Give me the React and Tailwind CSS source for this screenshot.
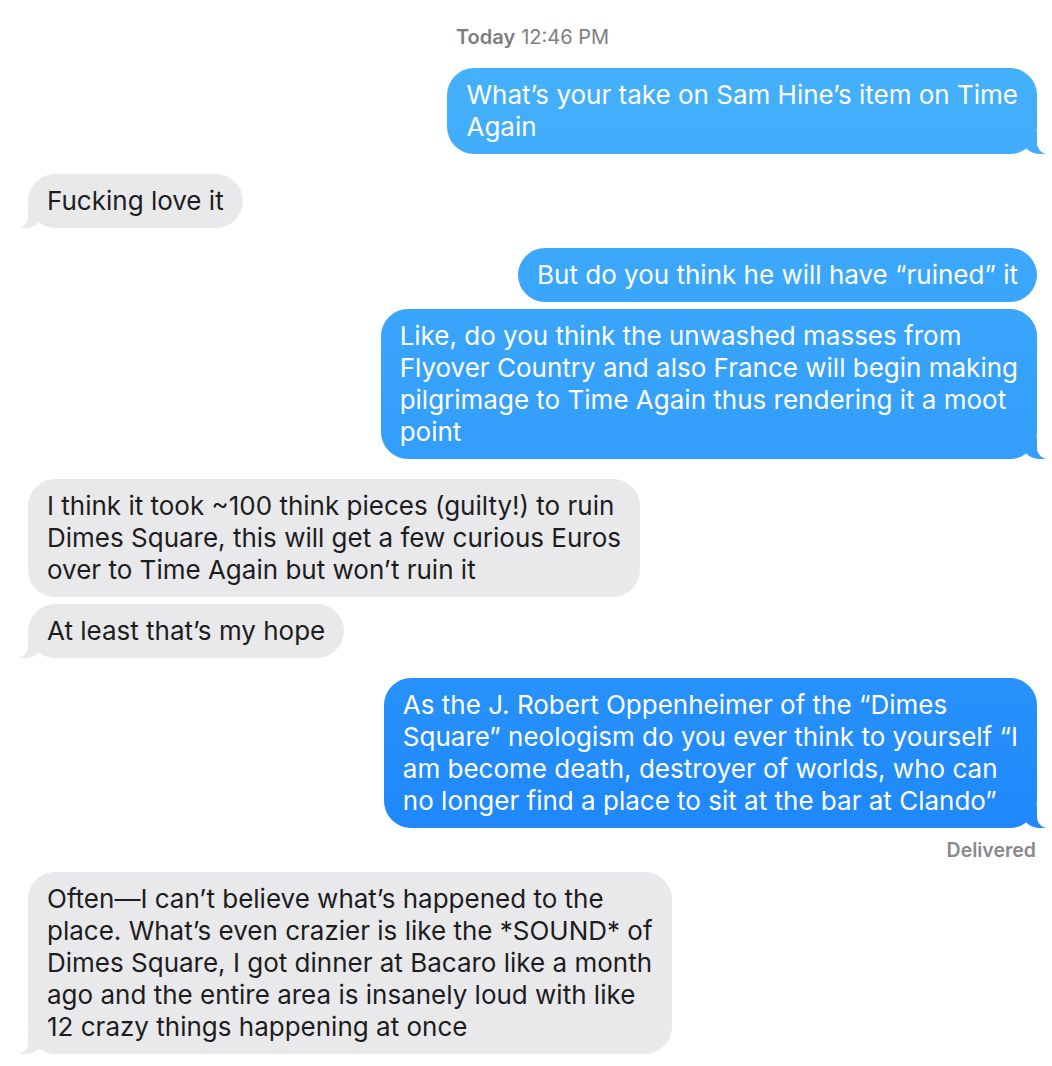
import React from "react";

// iMessage thread - sent bubbles share one window-fixed gradient, like macOS Messages
const SENT_BG = "bg-fixed bg-linear-to-b from-[#48b4fb] via-[#2f9afb] to-[#1479fb]";

const messages = [
  { id: 1, me: true, tail: true, lines: ["What’s your take on Sam Hine’s item on Time", "Again"] },
  { id: 2, me: false, tail: true, lines: ["Fucking love it"] },
  { id: 3, me: true, tail: false, lines: ["But do you think he will have “ruined” it"] },
  {
    id: 4, me: true, tail: true,
    lines: [
      "Like, do you think the unwashed masses from",
      "Flyover Country and also France will begin making",
      "pilgrimage to Time Again thus rendering it a moot",
      "point",
    ],
  },
  {
    id: 5, me: false, tail: false,
    lines: [
      "I think it took ~100 think pieces (guilty!) to ruin",
      "Dimes Square, this will get a few curious Euros",
      "over to Time Again but won’t ruin it",
    ],
  },
  { id: 6, me: false, tail: true, lines: ["At least that’s my hope"] },
  {
    id: 7, me: true, tail: true, delivered: true,
    lines: [
      "As the J. Robert Oppenheimer of the “Dimes",
      "Square” neologism do you ever think to yourself “I",
      "am become death, destroyer of worlds, who can",
      "no longer find a place to sit at the bar at Clando”",
    ],
  },
  {
    id: 8, me: false, tail: true,
    lines: [
      "Often—I can’t believe what’s happened to the",
      "place. What’s even crazier is like the *SOUND* of",
      "Dimes Square, I got dinner at Bacaro like a month",
      "ago and the entire area is insanely loud with like",
      "12 crazy things happening at once",
    ],
  },
];

function Bubble({ msg }) {
  const { me, tail, lines } = msg;
  return (
    <div
      className={`relative rounded-[27px] pl-[19px] pr-[19px] py-[11px] text-[26px] leading-[32px] whitespace-nowrap ${
        me ? `${SENT_BG} text-white` : "bg-[#e9e9eb] text-[#1d1d1f]"
      }`}
    >
      {tail && me && (
        <>
          <span className={`absolute bottom-0 right-[-8px] h-[22px] w-[22px] rounded-bl-[17px_14px] ${SENT_BG}`} />
          <span className="absolute bottom-0 right-[-11px] h-[24px] w-[11px] rounded-bl-[11px] bg-white" />
        </>
      )}
      {tail && !me && (
        <>
          <span className="absolute bottom-0 left-[-8px] h-[22px] w-[22px] rounded-br-[17px_14px] bg-[#e9e9eb]" />
          <span className="absolute bottom-0 left-[-11px] h-[24px] w-[11px] rounded-br-[11px] bg-white" />
        </>
      )}
      <div className="relative">
        {lines.map((l, i) => (
          <div key={i}>{l}</div>
        ))}
      </div>
    </div>
  );
}

export default function App() {
  return (
    <div
      className="min-h-screen w-[1052px] bg-white pl-[28px] pr-[15px] pt-[25px] pb-[14px]"
      style={{ fontFamily: "Inter, 'Noto Sans', sans-serif" }}
    >
      <div className="flex justify-center text-[20px] leading-[24px] text-[#7d7d82]">
        <span className="font-semibold">Today</span>
        <span className="ml-[6px]">12:46 PM</span>
      </div>

      <div className="mt-[19px] flex flex-col">
        {messages.map((m, i) => {
          const prev = messages[i - 1];
          const gap = !prev ? "" : prev.delivered ? "mt-[11px]" : prev.me === m.me ? "mt-[7px]" : "mt-[20px]";
          return (
            <div key={m.id} className={`flex flex-col ${m.me ? "items-end" : "items-start"} ${gap}`}>
              <Bubble msg={m} />
              {m.delivered && (
                <div className="mt-[11px] pr-[1px] text-[19.5px] leading-[22px] font-semibold text-[#8a8a8e]">
                  Delivered
                </div>
              )}
            </div>
          );
        })}
      </div>
    </div>
  );
}
